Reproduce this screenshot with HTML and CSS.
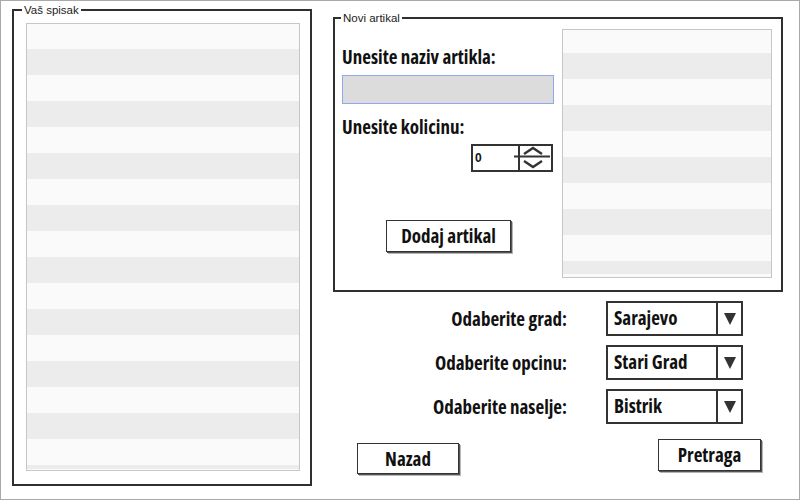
FILE: index.html
```html
<!DOCTYPE html>
<html lang="bs">
<head>
<meta charset="utf-8">
<title>Spisak</title>
<link rel="stylesheet" href="styles.css">
</head>
<body>
<div class="screen">
  <fieldset class="group list-group">
    <legend>Vaš spisak</legend>
    <div class="list tall"></div>
  </fieldset>
  <div class="side">
    <fieldset class="group new-item">
      <legend>Novi artikal</legend>
      <div class="new-body">
        <div class="form">
          <div class="lbl l1">Unesite naziv artikla:</div>
          <div class="text-input"></div>
          <div class="lbl l2">Unesite kolicinu:</div>
          <div class="spinner">
            <div class="spin-val">0</div>
            <div class="spin-btns">
              <svg width="30" height="24" viewBox="0 0 30 24">
                <line x1="-6" y1="10.5" x2="30" y2="10.5" stroke="#333" stroke-width="2"/>
                <polyline points="4,8 13,2 22,8" fill="none" stroke="#333" stroke-width="2.4"/>
                <polyline points="4,15 13,21 22,15" fill="none" stroke="#333" stroke-width="2.4"/>
              </svg>
            </div>
          </div>
          <button class="btn add">Dodaj artikal</button>
        </div>
        <div class="list short"></div>
      </div>
    </fieldset>
    <div class="selects">
      <div class="row">
        <div class="lbl">Odaberite grad:</div>
        <div class="select"><span class="val">Sarajevo</span><span class="arrow"><svg width="12" height="12" viewBox="0 0 12 12"><polygon points="0,0 12,0 6,12" fill="#333"/></svg></span></div>
      </div>
      <div class="row">
        <div class="lbl">Odaberite opcinu:</div>
        <div class="select"><span class="val">Stari Grad</span><span class="arrow"><svg width="12" height="12" viewBox="0 0 12 12"><polygon points="0,0 12,0 6,12" fill="#333"/></svg></span></div>
      </div>
      <div class="row">
        <div class="lbl">Odaberite naselje:</div>
        <div class="select"><span class="val">Bistrik</span><span class="arrow"><svg width="12" height="12" viewBox="0 0 12 12"><polygon points="0,0 12,0 6,12" fill="#333"/></svg></span></div>
      </div>
    </div>
    <div class="actions">
      <button class="btn back">Nazad</button>
      <button class="btn search">Pretraga</button>
    </div>
  </div>
</div>
</body>
</html>
```
FILE: styles.css
```css
* { box-sizing: border-box; }
body { margin: 0; background: #fff; }

.screen {
  width: 800px;
  height: 500px;
  border: 1px solid #aaa;
  display: flex;
  align-items: flex-start;
  padding: 2px 0 0 11px;
  font-family: "Open Sans", "Liberation Sans", sans-serif;
  font-stretch: 75%;
  color: #111;
}

.group {
  margin: 0;
  padding: 0;
  border: 2px solid #2f2f2f;
  min-width: 0;
}
.group legend {
  font: 11.5px/14px "Liberation Sans", Arial, sans-serif;
  color: #222;
  padding: 0 2px;
}

.list {
  border: 1px solid #c6c6c6;
  background: repeating-linear-gradient(#fafafa 0 26px, #ececec 26px 52px);
}

.list-group { width: 300px; height: 483px; }
.list-group legend { margin-left: 8px; }
.list.tall { margin: 6px 10px 0 12px; height: 448px; background-position: 0 -1px; }

.side {
  margin-left: 21px;
  margin-top: 8px;
  width: 450px;
  display: flex;
  flex-direction: column;
}

.new-item { height: 281px; }
.new-item legend { margin-left: 6px; }
.new-body { display: flex; gap: 8px; padding: 4px 9px 0 7px; }
.list.short { width: 211px; height: 249px; background-position: 0 -3px; }

.form { width: 212px; display: flex; flex-direction: column; align-items: flex-start; }
.lbl { font-size: 19px; line-height: 22px; font-weight: bold; white-space: nowrap; }
.l1 { margin-top: 17px; }
.text-input { width: 212px; height: 29px; margin-top: 7px; background: #dcdcdc; border: 1px solid #8fa9ee; }
.l2 { margin-top: 12px; }

.spinner {
  align-self: flex-end;
  margin-right: 1px;
  margin-top: 6px;
  width: 82px;
  height: 28px;
  border: 2px solid #333;
  display: flex;
}
.spin-val {
  width: 45px;
  font: bold 12px/24px "Liberation Sans", Arial, sans-serif;
  padding-left: 2px;
}
.spin-btns { flex: 1; border-left: 2px solid #333; display: flex; }
.spin-btns svg { overflow: visible; }

.btn {
  font-family: inherit;
  font-stretch: 75%;
  font-size: 19px;
  font-weight: bold;
  color: #111;
  background: #fff;
  border: 1px solid #333;
  box-shadow: 1px 1px 0 #555, 2px 2px 0 #b5b5b5;
  padding: 0;
  line-height: 28px;
  white-space: nowrap;
}
.btn.add { margin-left: 44px; margin-top: 48px; width: 125px; height: 32px; }

.selects { margin-top: 9px; display: flex; flex-direction: column; gap: 9px; }
.row { display: flex; align-items: center; }
.row .lbl { width: 234px; text-align: right; }
.select {
  margin-left: 39px;
  width: 137px;
  height: 35px;
  border: 2px solid #333;
  display: flex;
}
.select .val { width: 108px; padding-left: 6px; font-size: 19px; font-weight: bold; line-height: 30px; white-space: nowrap; }
.select .arrow { flex: 1; border-left: 2px solid #333; display: flex; align-items: center; justify-content: center; }

.actions { margin-top: 15px; display: flex; align-items: flex-start; }
.btn.back { margin-left: 24px; margin-top: 4px; width: 102px; height: 31px; }
.btn.search { margin-left: 199px; width: 103px; height: 32px; }
```
